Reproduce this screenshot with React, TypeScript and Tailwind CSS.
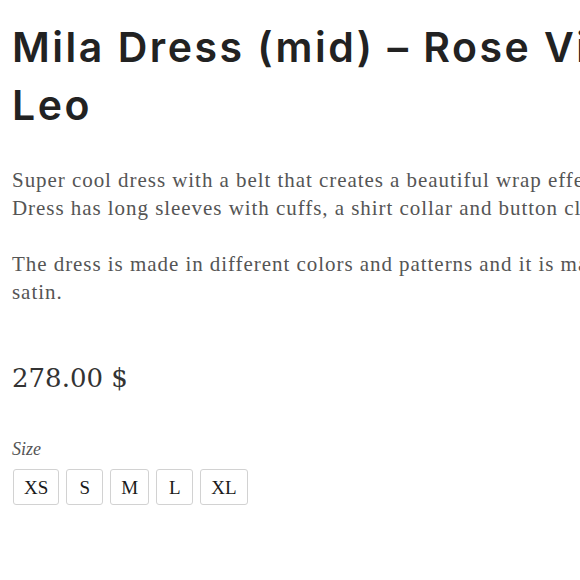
const sizes = ['XS', 'S', 'M', 'L', 'XL'];

export default function App() {
  return (
    <div className="w-[580px] h-[580px] overflow-hidden bg-white">
      <div className="w-[1000px] pl-3 pt-[18px]">
        <h1 className="font-['Inter',sans-serif] font-semibold text-[41px] leading-[58px] tracking-[2.5px] text-[#222] whitespace-nowrap">
          Mila Dress (mid) – Rose Vintage
          <br />
          Leo
        </h1>

        <div className="mt-8 font-['Liberation_Serif',serif] text-[21px] leading-[28px] tracking-[0.95px] text-[#555] whitespace-nowrap">
          <p>
            Super cool dress with a belt that creates a beautiful wrap effect.
            <br />
            Dress has long sleeves with cuffs, a shirt collar and button closure.
          </p>
          <p className="mt-7">
            The dress is made in different colors and patterns and it is made in a soft
            <br />
            satin.
          </p>
        </div>

        <div className="mt-[57px] font-['DejaVu_Serif',serif] text-[26px] leading-[30px] text-[#333]">
          278.00 $
        </div>

        <div className="mt-11 font-['Liberation_Serif',serif] italic text-[18px] leading-[24px] text-[#555]">
          Size
        </div>

        <div className="mt-2 ml-px flex gap-[7px]">
          {sizes.map((s) => (
            <button
              key={s}
              className="h-9 min-w-[37px] px-[10px] flex items-center justify-center border border-[#d2d2d2] rounded-[3px] bg-white font-['Liberation_Serif',serif] text-[19px] leading-none text-[#1a1a1a]"
            >
              {s}
            </button>
          ))}
        </div>
      </div>
    </div>
  );
}
